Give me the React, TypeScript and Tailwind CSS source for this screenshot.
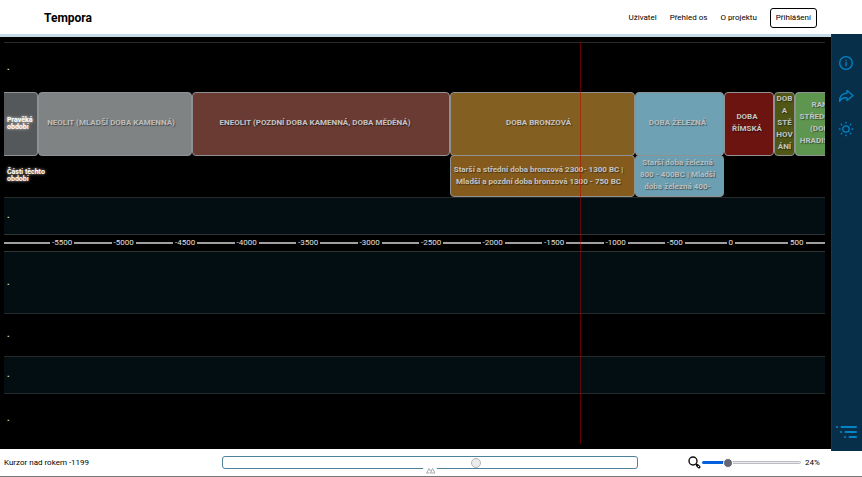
import React from "react";

const periods = [
  { name: "", color: "bg-[#54585a]", text: "" },
  { name: "NEOLIT (MLADŠÍ DOBA KAMENNÁ)", color: "bg-[#7f8384]", text: "text-[#bcbebe]", pad: "pr-2" },
  { name: "ENEOLIT (POZDNÍ DOBA KAMENNÁ, DOBA MĚDĚNÁ)", color: "bg-[#693b32]", text: "text-[#c4c4c4]", pad: "pr-3" },
  { name: "DOBA BRONZOVÁ", color: "bg-[#845f22]", text: "text-[#c4c4c4]", pad: "pr-2" },
  { name: "DOBA ŽELEZNÁ", color: "bg-[#6fa1b4]", text: "text-[#bcbebe]", pad: "pr-1" },
  { name: "DOBA ŘÍMSKÁ", color: "bg-[#6b1410]", text: "text-[#c4c4c4]", pad: "pr-1" },
  { name: "DOBA STĚHOVÁNÍ", color: "bg-[#4f5616]", text: "text-[#c4c4c4]" },
];

const years = [-5500, -5000, -4500, -4000, -3500, -3000, -2500, -2000, -1500, -1000, -500, 0, 500];

const shadow = "[text-shadow:1px_1px_1px_rgba(0,0,0,0.45)]";
const cell = "flex min-w-0 items-center justify-center rounded-[4px] border border-[#8e9292] text-center font-bold " + shadow;

function RowDot() {
  return <span className="pb-[2px] pl-[3px] text-[9px] font-bold text-[#e0e0d8]">.</span>;
}

function RowLabel({ children }: { children: React.ReactNode }) {
  return (
    <span className="absolute top-1/2 left-[3px] w-10 -translate-y-1/2 text-[7px] leading-[7px] font-bold text-white [text-shadow:0_0_3px_#fff]">
      {children}
    </span>
  );
}

function Timeline() {
  return (
    <main className="relative flex min-w-0 flex-1 flex-col bg-black pt-[5px] pr-[6px] pl-1 text-[8px] leading-3">
      <div className="flex h-[50px] items-center border-t border-[#262a2a]"><RowDot /></div>

      <div className="relative grid h-[63px] grid-cols-[34fr_154fr_258fr_185fr_89fr_50fr_21fr_30fr]">
        {periods.map((p, i) => (
          <div key={i} className={cell + " pb-[2px] [overflow-wrap:anywhere] " + p.color + " " + p.text + " " + (p.pad ?? "") + (i === 0 ? " rounded-l-none border-l-0" : "")}>
            {p.name}
          </div>
        ))}
        <div className="flex min-w-0 items-center overflow-hidden rounded-l-[4px] border border-r-0 border-[#8e9292] bg-[#5f964f] pb-[2px]">
          <span className={"w-[52px] shrink-0 text-center font-bold text-[#c4c4c4] " + shadow}>
            RANÝ STŘEDOVĚK (DOBA HRADIŠTNÍ)
          </span>
        </div>
        <RowLabel>Pravěká období</RowLabel>
      </div>

      <div className="relative grid h-[42px] grid-cols-[446fr_185fr_89fr_101fr]">
        <div />
        <div className={cell + " bg-[#845b1c] pr-2 text-[#c4c4c4]"}>
          <span>Starší a střední doba bronzová 2300- 1300 BC | Mladší a pozdní doba bronzová 1300 - 750 BC</span>
        </div>
        <div className={cell + " bg-[#6c9fb2] pr-1 pb-[2px] text-[#bcbebe]"}>
          <span>Starší doba železná 800 - 400BC | Mladší doba železná 400-</span>
        </div>
        <RowLabel>Části těchto období</RowLabel>
      </div>

      <div className="flex h-[37px] items-center border-t border-[#262a2a] bg-[#030e12]"><RowDot /></div>

      <div className="grid h-[17px] grid-cols-[92fr_repeat(12,123fr)_74fr] items-center border-t border-[#303434] text-[#e0e0e0]">
        <i className="h-[2px] bg-[#a0a0a0]" />
        {years.map((y) => (
          <div key={y} className="flex min-w-0 items-center gap-[2px] pl-[2px]">
            <span>{y}</span>
            <i className="h-[2px] flex-1 bg-[#a0a0a0]" />
          </div>
        ))}
      </div>

      <div className="flex h-[62px] items-center border-t border-[#303434] bg-[#030e12]"><RowDot /></div>
      <div className="flex h-[43px] items-center border-t border-[#262a2a]"><RowDot /></div>
      <div className="flex h-[38px] items-center border-y border-[#262a2a] bg-[#030e12]"><RowDot /></div>
      <div className="flex h-[50px] items-center"><RowDot /></div>

      <div className="absolute top-[5px] bottom-[5px] left-[70%] -ml-[2px] w-px bg-[#c00000]/50" />
    </main>
  );
}

function Sidebar() {
  const button = "flex size-4 items-center justify-center";
  return (
    <aside className="-mt-[3px] -mb-[2px] flex w-[31px] shrink-0 flex-col items-center gap-[17px] border-l border-[#183848] bg-[#082f49] pt-[21px] pr-[2px] text-[#0284c7]">
      <button aria-label="Informace" className={button}>
        <svg viewBox="0 0 24 24" className="size-4 shrink-0" fill="none" stroke="currentColor" strokeWidth="2" strokeLinecap="round">
          <circle cx="12" cy="12" r="9.500" /><path d="M12 11v5M12 8v.1" />
        </svg>
      </button>
      <button aria-label="Sdílet" className={button}>
        <svg viewBox="0 0 16 16" className="size-4 shrink-0" fill="none" stroke="currentColor" strokeWidth="1.300" strokeLinejoin="round">
          <path d="M9 2.500L15 7.500L9 12.500V9.800C5.500 9.500 3 10.800 1.500 13.500C1.500 9 4 5.500 9 5.200Z" />
        </svg>
      </button>
      <button aria-label="Světlý režim" className={button}>
        <svg viewBox="0 0 24 24" className="size-4 shrink-0" fill="none" stroke="currentColor" strokeWidth="2" strokeLinecap="round">
          <circle cx="12" cy="12" r="4.800" />
          <path d="M12 2v1M12 21v1M2 12h1M21 12h1M4.900 4.900l.7.7M18.400 18.400l.7.7M4.900 19.100l.7-.7M18.400 5.600l.7-.7" />
        </svg>
      </button>
      <button aria-label="Seznam" className="mt-auto mb-3 flex items-center justify-center">
        <svg viewBox="0 0 21 14" className="h-[14px] w-[21px]" stroke="currentColor" strokeWidth="2" strokeLinecap="round">
          <path d="M1 2h.1M5.500 2H20M5 7h.1M9.500 7H20M9 12h.1M13.500 12H20" />
        </svg>
      </button>
    </aside>
  );
}

export default function App() {
  return (
    <div className="flex min-h-screen flex-col bg-white font-[Roboto,sans-serif] text-[8px] text-black">
      <header className="flex h-[37px] items-center justify-between border-b-[3px] border-[#c5dce8] pt-[2px] pr-[45px] pl-11">
        <h1 className="text-[12px] font-bold">Tempora</h1>
        <nav className="flex items-center gap-[13px]">
          <a href="#uzivatel">Uživatel</a>
          <a href="#prehled">Přehled os</a>
          <a href="#projekt">O projektu</a>
          <button className="h-5 rounded-[3px] border border-black px-[5px]">Přihlášení</button>
        </nav>
      </header>

      <div className="flex flex-1">
        <Timeline />
        <Sidebar />
      </div>

      <footer className="flex h-7 items-center border-b border-[#777] px-1">
        <span className="w-[218px] shrink-0">Kurzor nad rokem -1199</span>
        <div className="relative flex h-[13px] flex-1 items-center rounded-[3px] border border-[#4f819b]">
          <input
            type="range"
            aria-label="Posun na ose"
            defaultValue={61.5}
            step={0.5}
            className="h-[10px] w-full appearance-none bg-transparent [&::-webkit-slider-thumb]:size-[10px] [&::-webkit-slider-thumb]:appearance-none [&::-webkit-slider-thumb]:rounded-full [&::-webkit-slider-thumb]:border [&::-webkit-slider-thumb]:border-[#b5b5b5] [&::-webkit-slider-thumb]:bg-[#ececec]"
          />
          <span className="absolute top-[7px] left-1/2 flex h-3 w-[15px] -translate-x-1/2 items-center justify-center rounded-t-full bg-white">
            <svg viewBox="0 0 10 7" className="h-[7px] w-[10px]" fill="none" stroke="#aaa" strokeLinejoin="round">
              <path d="M4 6H1l2.500-4.500L5 4M5 6l2-4.500L9.500 6z" />
            </svg>
          </span>
        </div>
        <div className="ml-[50px] flex w-[170px] shrink-0 items-center">
          <svg viewBox="0 0 13 13" className="size-[13px]" fill="none" stroke="#111">
            <circle cx="5" cy="5" r="4" strokeWidth="1.400" /><path d="M8 8l1.500 1.500" strokeWidth="2" /><path d="M9.500 9.500l1.500 1.500" strokeWidth="3" strokeLinecap="round" /><path d="M10 10l1 1" stroke="#fff" strokeWidth="1" />
          </svg>
          <label className="relative ml-px flex h-[10px] w-[99px] items-center">
            <span className="h-[3px] w-1/4 rounded-l-full bg-[#0060df]" />
            <span className="h-[3px] flex-1 rounded-r-full border border-[#bdbdc5] bg-[#e9e9ed]" />
            <input
              type="range"
              aria-label="Přiblížení"
              defaultValue={24}
              className="absolute inset-0 h-[10px] w-full appearance-none bg-transparent [&::-webkit-slider-thumb]:size-[10px] [&::-webkit-slider-thumb]:appearance-none [&::-webkit-slider-thumb]:rounded-full [&::-webkit-slider-thumb]:border [&::-webkit-slider-thumb]:border-white [&::-webkit-slider-thumb]:bg-[#676774]"
            />
          </label>
          <span className="ml-1">24%</span>
        </div>
      </footer>
    </div>
  );
}
